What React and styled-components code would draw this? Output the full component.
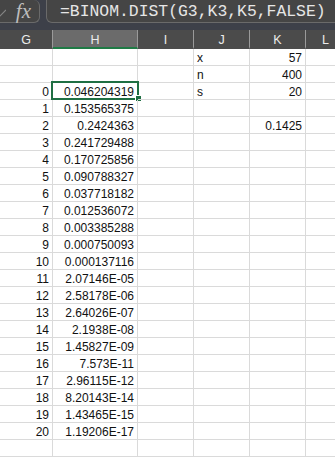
import styled, { createGlobalStyle } from "styled-components";

const Global = createGlobalStyle`
  body { margin: 0; background: #fff; font-family: "Liberation Sans", Arial, sans-serif; }
`;

const Page = styled.div`
  width: 335px;
  height: 457px;
  overflow: hidden;
  display: flex;
  flex-direction: column;
`;

const FormulaBar = styled.div`
  height: 37px;
  background: #3d4049;
  display: flex;
  gap: 6px;
  padding-bottom: 7px;
  box-sizing: border-box;
`;

const FxBox = styled.div`
  width: 40px;
  background: #454545;
  border: 1px solid #6a6a6a;
  border-top: none;
  border-left: none;
  border-radius: 0 6px 6px 0;
  display: flex;
  align-items: center;
  justify-content: flex-end;
  padding-right: 7px;
  box-sizing: border-box;
  position: relative;
`;

const CheckIcon = styled.svg`
  position: absolute;
  left: 0;
  top: 9px;
`;

const Fx = styled.span`
  font-family: "Liberation Serif", "Times New Roman", serif;
  font-style: italic;
  font-size: 21px;
  line-height: 1;
  color: #bdbdbd;
  padding-right: 1px;
`;

const FormulaInput = styled.div`
  flex: 1;
  margin-right: -10px;
  background: #454545;
  border: 1px solid #6a6a6a;
  border-top: none;
  border-radius: 0 0 6px 6px;
  display: flex;
  align-items: center;
  padding-left: 13px;
  font-family: "Liberation Mono", "DejaVu Sans Mono", monospace;
  font-size: 16.4px;
  color: #e6e6e6;
  white-space: nowrap;
  overflow: hidden;
`;

const Row = styled.div`
  display: flex;
  height: ${(p) => (p.$header ? "19px" : "17px")};
  flex-shrink: 0;
`;

const widths = [53, 85, 56, 56, 56, 40];

const HeadCell = styled.div`
  width: ${(p) => p.$w}px;
  flex-shrink: 0;
  box-sizing: border-box;
  background: ${(p) => (p.$active ? "#6b6b6b" : "#4b4b4b")};
  border-right: 1px solid #9a9a9a;
  border-bottom: 2px solid ${(p) => (p.$active ? "#1f7a45" : "#4b4b4b")};
  color: #ececec;
  font-size: 12.5px;
  display: flex;
  align-items: center;
  justify-content: center;
  padding-top: 2px;
`;

const Cell = styled.div`
  width: ${(p) => p.$w}px;
  flex-shrink: 0;
  box-sizing: border-box;
  border-right: 1px solid #dadada;
  border-bottom: 1px solid #dadada;
  font-size: 12px;
  color: #111;
  line-height: 16px;
  padding: 1px 3px 0 3px;
  text-align: ${(p) => (p.$left ? "left" : "right")};
  white-space: nowrap;
  position: relative;
`;

const Selection = styled.div`
  position: absolute;
  left: -2px;
  top: -2px;
  right: -2px;
  bottom: -1px;
  border: 2px solid #1f6f43;
`;

const Handle = styled.div`
  position: absolute;
  right: -5px;
  bottom: -4px;
  width: 5px;
  height: 5px;
  background: #1f6f43;
  border: 1px solid #fff;
`;

const values = [
  "0.046204319", "0.153565375", "0.2424363", "0.241729488", "0.170725856",
  "0.090788327", "0.037718182", "0.012536072", "0.003385288", "0.000750093",
  "0.000137116", "2.07146E-05", "2.58178E-06", "2.64026E-07", "2.1938E-08",
  "1.45827E-09", "7.573E-11", "2.96115E-12", "8.20143E-14", "1.43465E-15",
  "1.19206E-17",
];

const top = [
  { j: "x", k: "57" },
  { j: "n", k: "400" },
  { j: "s", k: "20" },
];

const rows = [];
for (let i = 0; i < 24; i++) {
  const r = { g: "", h: "", j: "", k: "" };
  if (i < 3) Object.assign(r, top[i]);
  if (i >= 2 && i - 2 < values.length) {
    r.g = String(i - 2);
    r.h = values[i - 2];
  }
  if (i === 4) r.k = "0.1425";
  rows.push(r);
}

export default function App() {
  return (
    <Page>
      <Global />
      <FormulaBar>
        <FxBox>
          <CheckIcon width="6" height="8" viewBox="0 0 6 8">
            <path d="M-3 4 L0 7 L6 1" stroke="#858585" strokeWidth="1.2" fill="none" />
          </CheckIcon>
          <Fx>fx</Fx>
        </FxBox>
        <FormulaInput>=BINOM.DIST(G3,K3,K5,FALSE)</FormulaInput>
      </FormulaBar>
      <Row $header>
        {["G", "H", "I", "J", "K", "L"].map((c, i) => (
          <HeadCell key={c} $w={widths[i]} $active={c === "H"}>{c}</HeadCell>
        ))}
      </Row>
      {rows.map((r, i) => (
        <Row key={i}>
          <Cell $w={widths[0]}>{r.g}</Cell>
          <Cell $w={widths[1]}>
            {r.h}
            {i === 2 && (
              <Selection>
                <Handle />
              </Selection>
            )}
          </Cell>
          <Cell $w={widths[2]} />
          <Cell $w={widths[3]} $left>{r.j}</Cell>
          <Cell $w={widths[4]}>{r.k}</Cell>
          <Cell $w={widths[5]} />
        </Row>
      ))}
    </Page>
  );
}
